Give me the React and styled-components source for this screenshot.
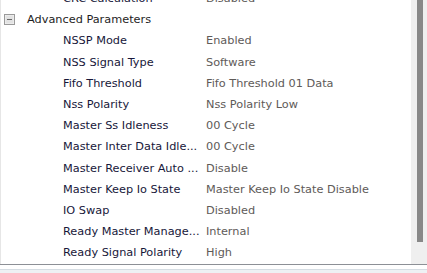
import React from 'react';
import styled, { createGlobalStyle } from 'styled-components';

const Global = createGlobalStyle`
  html, body {
    margin: 0;
    padding: 0;
    background: #ffffff;
    overflow: hidden;
  }
`;

const params = [
  ['NSSP Mode', 'Enabled'],
  ['NSS Signal Type', 'Software'],
  ['Fifo Threshold', 'Fifo Threshold 01 Data'],
  ['Nss Polarity', 'Nss Polarity Low'],
  ['Master Ss Idleness', '00 Cycle'],
  ['Master Inter Data Idle...', '00 Cycle'],
  ['Master Receiver Auto ...', 'Disable'],
  ['Master Keep Io State', 'Master Keep Io State Disable'],
  ['IO Swap', 'Disabled'],
  ['Ready Master Manage...', 'Internal'],
  ['Ready Signal Polarity', 'High'],
];

const App = () => {
  return (
    <Page>
      <Global />
      <Panel>
        <Tree>
          <List>
            <Row>
              <Label>CRC Calculation</Label>
              <Value>Disabled</Value>
            </Row>
            <Group>
              <Toggle>
                <svg width="11" height="11" viewBox="0 0 11 11">
                  <rect x="0.5" y="0.5" width="10" height="10" fill="#f4f4f4" stroke="#9a9a9a" />
                  <rect x="1.5" y="1.5" width="8" height="8" fill="#e2e2e2" />
                  <line x1="3" y1="5.5" x2="8" y2="5.5" stroke="#6a6a6a" />
                </svg>
              </Toggle>
              <GroupTitle>Advanced Parameters</GroupTitle>
            </Group>
            {params.map(([label, value]) => (
              <Row key={label}>
                <Label>{label}</Label>
                <Value>{value}</Value>
              </Row>
            ))}
          </List>
        </Tree>
        <Scrollbar>
          <Thumb />
        </Scrollbar>
      </Panel>
      <Footer />
    </Page>
  );
};

export default App;

const Page = styled.div`
  width: 427px;
  height: 273px;
  display: flex;
  flex-direction: column;
  font-family: "DejaVu Sans", Verdana, sans-serif;
  font-size: 11.3px;
`;

const Panel = styled.div`
  height: 264px;
  display: flex;
  border-left: 1px solid #e6e6e6;
  box-sizing: border-box;
`;

const Tree = styled.div`
  flex: 1;
  overflow: hidden;
`;

const List = styled.div`
  margin-top: -12px;
  display: flex;
  flex-direction: column;
`;

const Row = styled.div`
  display: grid;
  grid-template-columns: 143px 1fr;
  height: 21.2px;
  align-items: center;
  padding-left: 62px;
`;

const Label = styled.span`
  color: #17173a;
  white-space: nowrap;
`;

const Value = styled.span`
  color: #5e5a58;
  white-space: nowrap;
`;

const Group = styled.div`
  display: flex;
  align-items: center;
  height: 21.2px;
  padding-left: 3px;
  gap: 12px;
`;

const Toggle = styled.span`
  display: flex;
`;

const GroupTitle = styled.span`
  color: #1e1e1e;
`;

const Scrollbar = styled.div`
  width: 16px;
  background: #efefef;
  display: flex;
  justify-content: center;
  padding-left: 1px;
  box-sizing: border-box;
`;

const Thumb = styled.div`
  width: 6px;
  height: 242px;
  background: #888888;
`;

const Footer = styled.div`
  height: 9px;
  border-top: 1px solid #8d9096;
  box-sizing: border-box;
  background: linear-gradient(#ffffff 0 4px, #d6dde3 4px 5px, #eef1f4 5px);
`;
